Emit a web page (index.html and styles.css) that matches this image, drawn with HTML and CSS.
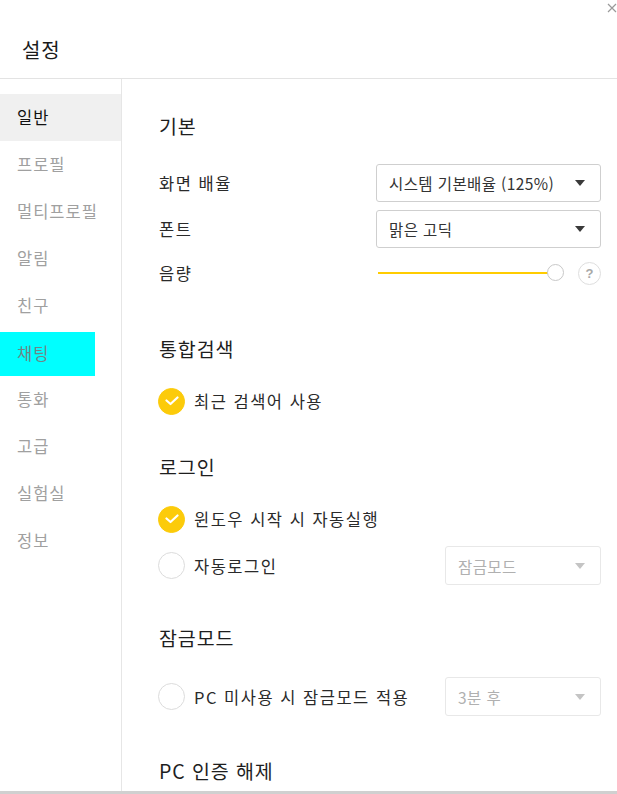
FILE: index.html
```html
<!DOCTYPE html>
<html lang="ko">
<head>
<meta charset="utf-8">
<link rel="stylesheet" href="styles.css">
</head>
<body>
<div class="window">
  <svg class="close" width="10" height="10" viewBox="0 0 10 10"><path d="M1 1 L9 9 M9 1 L1 9" stroke="#9a9a9a" stroke-width="1.2"/></svg>
  <header class="header"><h1 class="title">설정</h1></header>
  <div class="main">
    <nav class="sidebar">
      <div class="nav-item active">일반</div>
      <div class="nav-item">프로필</div>
      <div class="nav-item">멀티프로필</div>
      <div class="nav-item">알림</div>
      <div class="nav-item">친구</div>
      <div class="nav-item hl">채팅</div>
      <div class="nav-item">통화</div>
      <div class="nav-item">고급</div>
      <div class="nav-item">실험실</div>
      <div class="nav-item">정보</div>
    </nav>
    <section class="content">
      <h2 class="heading h-basic">기본</h2>
      <div class="row r-scale">
        <span class="label">화면 배율</span>
        <div class="select wide"><span>시스템 기본배율 (125%)</span><i class="arrow"></i></div>
      </div>
      <div class="row r-font">
        <span class="label">폰트</span>
        <div class="select wide"><span>맑은 고딕</span><i class="arrow"></i></div>
      </div>
      <div class="row r-vol">
        <span class="label">음량</span>
        <div class="vol">
          <div class="track"><div class="fill"></div><div class="knob"></div></div>
          <div class="help">?</div>
        </div>
      </div>

      <h2 class="heading h-search">통합검색</h2>
      <div class="row check-row r-recent">
        <span class="check on"><svg width="14" height="10" viewBox="0 0 14 10"><path d="M1.5 4.5 L5.5 8 L12.5 1.5" fill="none" stroke="#fff" stroke-width="2.2" stroke-linecap="round" stroke-linejoin="round"/></svg></span>
        <span class="label">최근 검색어 사용</span>
      </div>

      <h2 class="heading h-login">로그인</h2>
      <div class="row check-row r-win">
        <span class="check on"><svg width="14" height="10" viewBox="0 0 14 10"><path d="M1.5 4.5 L5.5 8 L12.5 1.5" fill="none" stroke="#fff" stroke-width="2.2" stroke-linecap="round" stroke-linejoin="round"/></svg></span>
        <span class="label">윈도우 시작 시 자동실행</span>
      </div>
      <div class="row check-row r-auto">
        <span class="check"></span>
        <span class="label grow">자동로그인</span>
        <div class="select narrow disabled"><span>잠금모드</span><i class="arrow"></i></div>
      </div>

      <h2 class="heading h-lock">잠금모드</h2>
      <div class="row check-row r-pc">
        <span class="check"></span>
        <span class="label grow">PC 미사용 시 잠금모드 적용</span>
        <div class="select narrow disabled"><span>3분 후</span><i class="arrow"></i></div>
      </div>

      <h2 class="heading h-auth">PC 인증 해제</h2>
    </section>
  </div>
  <div class="bottom-strip"></div>
</div>
</body>
</html>
```
FILE: styles.css
```css
* { box-sizing: border-box; }
html, body { margin: 0; padding: 0; background: #fff; }
body {
  font-family: "Noto Sans CJK KR", "Noto Sans", sans-serif;
  color: #222;
}
.window {
  position: relative;
  width: 617px;
  height: 794px;
  overflow: hidden;
  display: flex;
  flex-direction: column;
}
.close { position: absolute; top: 3px; left: 607px; }
.header {
  height: 79px;
  border-bottom: 1px solid #e3e3e3;
  padding: 36px 0 0 22px;
}
.title {
  margin: 0;
  font-size: 20px;
  font-weight: 400;
  line-height: 28px;
  letter-spacing: 0.8px;
  color: #1a1a1a;
}
.main { flex: 1; display: flex; min-height: 0; }
.sidebar {
  width: 122px;
  border-right: 1px solid #e6e6e6;
  padding-top: 15px;
  flex: none;
}
.nav-item {
  height: 47px;
  line-height: 46px;
  padding-left: 17px;
  font-size: 16.5px;
  letter-spacing: 1px;
  color: #a0a0a0;
}
.nav-item.active { background: #f0f0f0; color: #111; }
.nav-item.hl {
  background: linear-gradient(#00ffff, #00ffff) 0 3px / 95px 45px no-repeat;
  color: #6f8585;
  line-height: 49px;
}
.content {
  flex: 1;
  padding: 33px 16px 0 37px;
  display: flex;
  flex-direction: column;
}
.heading {
  margin: 0;
  font-size: 19.5px;
  font-weight: 400;
  line-height: 27px;
  letter-spacing: 0.9px;
  color: #1e1e1e;
}
.row { display: flex; align-items: center; }
.label {
  font-size: 16.5px;
  letter-spacing: 1.5px;
  color: #2a2a2a;
  line-height: 24px;
}
.grow { flex: 1; }
.r-scale { margin-top: 25px; justify-content: space-between; }
.r-font { margin-top: 8px; justify-content: space-between; }
.r-vol { margin-top: 12px; height: 26px; justify-content: space-between; }
.h-search { margin-top: 49px; }
.r-recent { margin-top: 25px; }
.h-login { margin-top: 38px; }
.r-win { margin-top: 25px; }
.r-auto { margin-top: 13px; }
.h-lock { margin-top: 39px; }
.r-pc { margin-top: 26px; }
.h-auth { margin-top: 41px; }

.select {
  height: 38px;
  border: 1px solid #cfcfcf;
  border-radius: 3px;
  display: flex;
  align-items: center;
  justify-content: space-between;
  padding: 0 15px 0 12px;
  font-size: 15.5px;
  letter-spacing: 0.4px;
  color: #333;
}
.select.wide { width: 225px; }
.select.narrow { width: 156px; height: 39px; }
.select.disabled { border-color: #e8e8e8; color: #b0b0b0; }
.arrow {
  width: 0; height: 0;
  border-left: 5px solid transparent;
  border-right: 5px solid transparent;
  border-top: 6px solid #3a3a3a;
}
.select.disabled .arrow { border-top-color: #c4c4c4; }

.vol { display: flex; align-items: center; width: 223px; }
.track {
  position: relative;
  width: 178px;
  height: 2px;
  background: #ffcc00;
}
.knob {
  position: absolute;
  right: -8px;
  top: -8px;
  width: 17px;
  height: 17px;
  border-radius: 50%;
  border: 1px solid #c8c8c8;
  background: #fff;
}
.help {
  margin-left: 22px;
  width: 23px;
  height: 23px;
  border-radius: 50%;
  border: 1px solid #dedede;
  color: #a8a8a8;
  font-family: "Liberation Sans", sans-serif;
  font-weight: 700;
  font-size: 13px;
  display: flex;
  align-items: center;
  justify-content: center;
}
.check-row { min-height: 28px; }
.check {
  width: 27px;
  height: 27px;
  border-radius: 50%;
  border: 1.5px solid #dcdcdc;
  margin: 0 9px 0 -1px;
  flex: none;
  display: flex;
  align-items: center;
  justify-content: center;
}
.check.on { background: #fccb0a; border-color: #fccb0a; }
.bottom-strip {
  position: absolute;
  left: 0; right: 0; bottom: 0;
  height: 3px;
  background: #d0d0d0;
}
```
